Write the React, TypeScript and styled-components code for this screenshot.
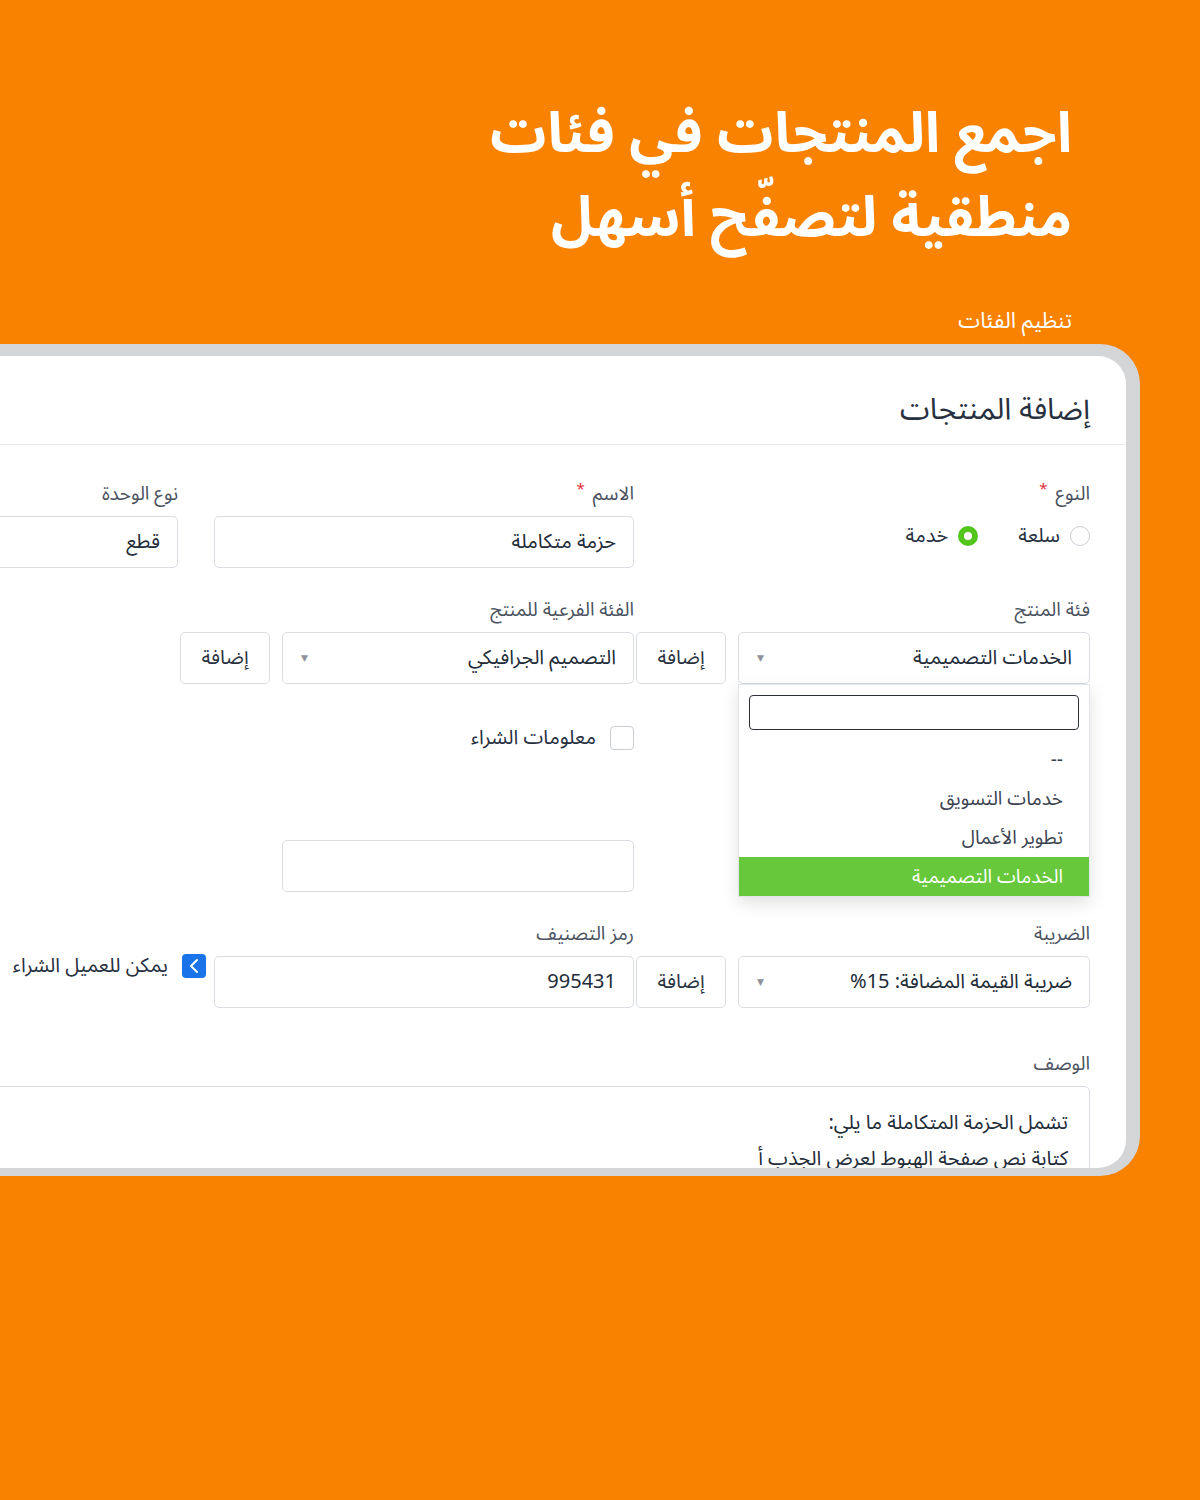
import styled, { createGlobalStyle } from "styled-components";

const GlobalStyle = createGlobalStyle`
  html, body {
    margin: 0;
    padding: 0;
  }
  body {
    font-family: "Noto Sans Arabic", "Noto Sans", "DejaVu Sans", sans-serif;
    background: #f98200;
  }
  * {
    box-sizing: border-box;
  }
`;

const Page = styled.div`
  direction: rtl;
  width: 1200px;
  height: 1500px;
  background: #f98200;
  overflow: hidden;
`;

const Hero = styled.header`
  height: 344px;
  padding: 92px 128px 0 0;
  color: #ffffff;
`;

const Headline = styled.h1`
  margin: 0;
  font-size: 56px;
  line-height: 84px;
  font-weight: 700;
`;

const Tagline = styled.p`
  margin: 46px 0 0;
  font-size: 22px;
  line-height: 30px;
`;

const Frame = styled.section`
  margin-right: 60px;
  height: 832px;
  padding: 12px 14px 8px 0;
  background: #d4d5d7;
  border-radius: 0 40px 40px 0;
`;

const Panel = styled.div`
  height: 100%;
  background: #ffffff;
  border-radius: 0 28px 28px 0;
  overflow: hidden;
`;

const PanelHeader = styled.div`
  height: 89px;
  padding: 34px 36px 0 0;
  border-bottom: 1px solid #e6e8eb;
`;

const PanelTitle = styled.h2`
  margin: 0;
  font-size: 30px;
  line-height: 40px;
  font-weight: 400;
  color: #27303f;
`;

const Form = styled.div`
  padding: 37px 36px 0 0;
`;

const Row = styled.div<{ $top?: number; $gap?: number }>`
  display: flex;
  align-items: flex-start;
  gap: ${p => p.$gap ?? 0}px;
  margin-top: ${p => p.$top ?? 0}px;
`;

const Field = styled.div<{ $w: number }>`
  display: flex;
  flex-direction: column;
  flex-shrink: 0;
  width: ${p => p.$w}px;
`;

const Label = styled.label`
  display: block;
  height: 24px;
  margin-bottom: 10px;
  font-size: 19px;
  line-height: 24px;
  color: #4a5260;
`;

const Star = styled.span`
  color: #e0323c;
  font-size: 15px;
  margin-right: 8px;
  vertical-align: top;
  line-height: 14px;
`;

const Controls = styled.div`
  display: flex;
  gap: 12px;
`;

const Box = styled.div<{ $w?: number; $h?: number }>`
  flex-shrink: 0;
  width: ${p => (p.$w ? `${p.$w}px` : "100%")};
  height: ${p => p.$h ?? 52}px;
  display: flex;
  align-items: center;
  padding: 0 17px;
  border: 1px solid #d9dde2;
  border-radius: 5px;
  background: #ffffff;
  font-size: 20px;
  color: #222b38;
  white-space: nowrap;
`;

const SelectBox = styled(Box)`
  justify-content: space-between;
  padding-left: 18px;
`;

const Caret = styled.span`
  font-size: 9px;
  color: #8d939c;
`;

const AddButton = styled.button`
  flex-shrink: 0;
  width: 90px;
  height: 52px;
  border: 1px solid #d9dde2;
  border-radius: 5px;
  background: #ffffff;
  font-family: inherit;
  font-size: 20px;
  color: #2a3340;
  padding: 0;
`;

const RadioGroup = styled.div`
  display: flex;
  align-items: center;
  gap: 40px;
  height: 40px;
`;

const RadioItem = styled.div`
  display: flex;
  align-items: center;
  gap: 10px;
  font-size: 20px;
  color: #27303f;
`;

const RadioDot = styled.span<{ $on?: boolean }>`
  width: 20px;
  height: 20px;
  border-radius: 50%;
  border: ${p => (p.$on ? "6px solid #52c41a" : "1px solid #c9ced5")};
  background: #ffffff;
`;

const CheckItem = styled.div<{ $top?: number; $side?: number }>`
  display: flex;
  align-items: center;
  gap: 14px;
  height: 24px;
  line-height: 24px;
  margin-top: ${p => p.$top ?? 0}px;
  margin-right: ${p => p.$side ?? 0}px;
  flex-shrink: 0;
  font-size: 20px;
  color: #27303f;
  white-space: nowrap;
`;

const CheckBox = styled.span<{ $on?: boolean }>`
  width: 24px;
  height: 24px;
  border-radius: 4px;
  display: flex;
  align-items: center;
  justify-content: center;
  border: ${p => (p.$on ? "none" : "1px solid #c9ced5")};
  background: ${p => (p.$on ? "#1a73e8" : "#ffffff")};
`;

const SelectWrap = styled.div`
  position: relative;
  flex-shrink: 0;
`;

const Menu = styled.div`
  position: absolute;
  top: 100%;
  right: 0;
  width: 352px;
  z-index: 5;
  background: #ffffff;
  border: 1px solid #e2e5e9;
  box-shadow: 0 6px 16px rgba(0, 0, 0, 0.12);
  padding-top: 10px;
`;

const Search = styled.div`
  height: 35px;
  margin: 0 10px 10px;
  border: 1px solid #2b303a;
  border-radius: 4px;
`;

const Option = styled.div<{ $active?: boolean }>`
  height: 39px;
  display: flex;
  align-items: center;
  padding-right: 26px;
  font-size: 19px;
  color: ${p => (p.$active ? "#ffffff" : "#3a4250")};
  background: ${p => (p.$active ? "#67c83c" : "transparent")};
`;

const Spacer = styled.div<{ $w: number }>`
  flex-shrink: 0;
  width: ${p => p.$w}px;
`;

const TextArea = styled.div`
  width: 1300px;
  height: 200px;
  flex-shrink: 0;
  padding: 18px 21px 0 0;
  border: 1px solid #d9dde2;
  border-radius: 5px;
  font-size: 20px;
  line-height: 36px;
  color: #222b38;
  white-space: nowrap;
`;

function Check({ on }: { on?: boolean }) {
  return (
    <CheckBox $on={on}>
      {on && (
        <svg width="14" height="16" viewBox="0 0 14 16">
          <polyline
            points="10,2 4,8 10,14"
            fill="none"
            stroke="#ffffff"
            strokeWidth="2"
            strokeLinecap="round"
            strokeLinejoin="round"
          />
        </svg>
      )}
    </CheckBox>
  );
}

function Select({ value, children }: { value: string; children?: React.ReactNode }) {
  return (
    <SelectWrap>
      <SelectBox $w={352}>
        <span>{value}</span>
        <Caret>▼</Caret>
      </SelectBox>
      {children}
    </SelectWrap>
  );
}

const categories = ["--", "خدمات التسويق", "تطوير الأعمال", "الخدمات التصميمية"];

export default function App() {
  return (
    <>
      <GlobalStyle />
      <Page>
        <Hero>
          <Headline>
            اجمع المنتجات في فئات
            <br />
            منطقية لتصفّح أسهل
          </Headline>
          <Tagline>تنظيم الفئات</Tagline>
        </Hero>
        <Frame>
          <Panel>
            <PanelHeader>
              <PanelTitle>إضافة المنتجات</PanelTitle>
            </PanelHeader>
            <Form>
              <Row>
                <Field $w={456}>
                  <Label>
                    النوع<Star>*</Star>
                  </Label>
                  <RadioGroup>
                    <RadioItem>
                      <RadioDot />
                      سلعة
                    </RadioItem>
                    <RadioItem>
                      <RadioDot $on />
                      خدمة
                    </RadioItem>
                  </RadioGroup>
                </Field>
                <Field $w={420}>
                  <Label>
                    الاسم<Star>*</Star>
                  </Label>
                  <Box>حزمة متكاملة</Box>
                </Field>
                <Spacer $w={36} />
                <Field $w={300}>
                  <Label>نوع الوحدة</Label>
                  <Box>قطع</Box>
                </Field>
              </Row>

              <Row $top={30} $gap={2}>
                <Field $w={454}>
                  <Label>فئة المنتج</Label>
                  <Controls>
                    <Select value="الخدمات التصميمية">
                      <Menu>
                        <Search />
                        {categories.map((c, i) => (
                          <Option key={c} $active={i === categories.length - 1}>
                            {c}
                          </Option>
                        ))}
                      </Menu>
                    </Select>
                    <AddButton>إضافة</AddButton>
                  </Controls>
                </Field>
                <Field $w={454}>
                  <Label>الفئة الفرعية للمنتج</Label>
                  <Controls>
                    <Select value="التصميم الجرافيكي" />
                    <AddButton>إضافة</AddButton>
                  </Controls>
                </Field>
              </Row>

              <Row $top={42}>
                <Spacer $w={456} />
                <CheckItem>
                  <Check />
                  معلومات الشراء
                </CheckItem>
              </Row>

              <Row $top={90}>
                <Spacer $w={456} />
                <Box $w={352} />
              </Row>

              <Row $top={30} $gap={2}>
                <Field $w={454}>
                  <Label>الضريبة</Label>
                  <Controls>
                    <Select value="ضريبة القيمة المضافة: 15%" />
                    <AddButton>إضافة</AddButton>
                  </Controls>
                </Field>
                <Field $w={420}>
                  <Label>رمز التصنيف</Label>
                  <Box>995431</Box>
                </Field>
                <CheckItem $top={32} $side={6}>
                  <Check on />
                  يمكن للعميل الشراء
                </CheckItem>
              </Row>

              <Row $top={44}>
                <Field $w={1300}>
                  <Label>الوصف</Label>
                  <TextArea>
                    تشمل الحزمة المتكاملة ما يلي:
                    <br />
                    كتابة نص صفحة الهبوط لعرض الجذب أ
                  </TextArea>
                </Field>
              </Row>
            </Form>
          </Panel>
        </Frame>
      </Page>
    </>
  );
}
